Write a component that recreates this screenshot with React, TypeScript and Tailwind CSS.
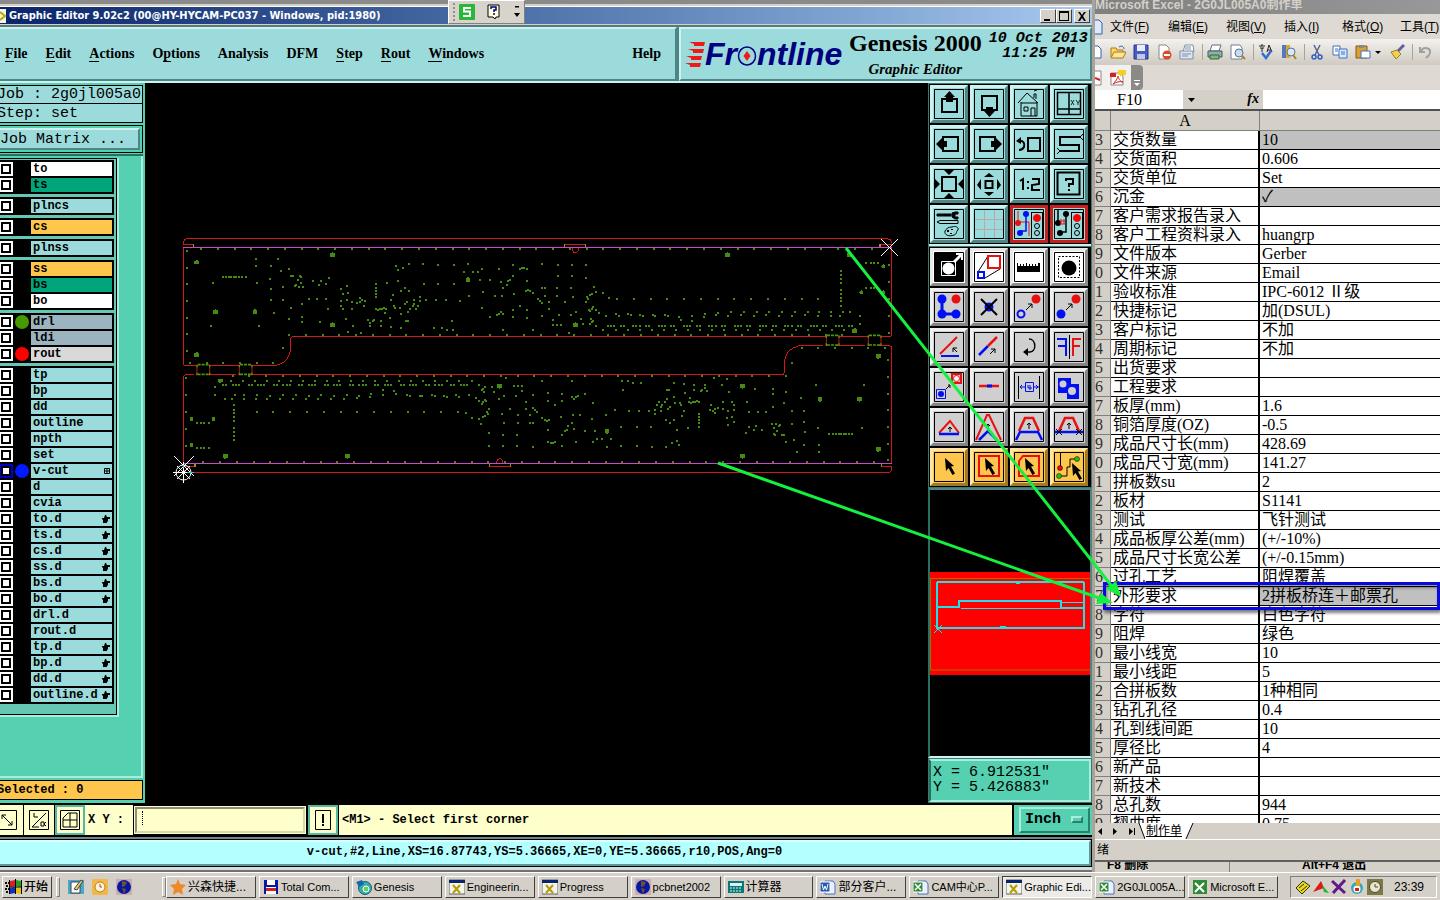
import type { ReactNode } from 'react'

type Layer = { name: string; tone?: string; dot?: string; mark?: 'hand' | 'grid'; active?: boolean }

const teal = 'bg-[#9cdbdb]'

const layerGroups: Layer[][] = [
  [{ name: 'to', tone: 'bg-white' }, { name: 'ts', tone: 'bg-[#00a57c]' }],
  [{ name: 'plncs' }],
  [{ name: 'cs', tone: 'bg-[#ffc64e]' }],
  [{ name: 'plnss' }],
  [{ name: 'ss', tone: 'bg-[#ffc64e]' }, { name: 'bs', tone: 'bg-[#00a57c]' }, { name: 'bo', tone: 'bg-white' }],
  [
    { name: 'drl', tone: 'bg-[#9bb4c0]', dot: 'bg-[#459a00]' },
    { name: 'ldi', tone: 'bg-[#9bb4c0]' },
    { name: 'rout', tone: 'bg-[#d9d9d9]', dot: 'bg-[#ff0000]' },
  ],
  [
    { name: 'tp' },
    { name: 'bp' },
    { name: 'dd' },
    { name: 'outline' },
    { name: 'npth' },
    { name: 'set' },
    { name: 'v-cut', dot: 'bg-[#0019ff]', mark: 'grid', active: true },
    { name: 'd' },
    { name: 'cvia' },
    { name: 'to.d', mark: 'hand' },
    { name: 'ts.d', mark: 'hand' },
    { name: 'cs.d', mark: 'hand' },
    { name: 'ss.d', mark: 'hand' },
    { name: 'bs.d', mark: 'hand' },
    { name: 'bo.d', mark: 'hand' },
    { name: 'drl.d' },
    { name: 'rout.d' },
    { name: 'tp.d', mark: 'hand' },
    { name: 'bp.d', mark: 'hand' },
    { name: 'dd.d', mark: 'hand' },
    { name: 'outline.d', mark: 'hand' },
  ],
]

const sheetRows: [string, string][] = [
  ['交货数量', '10'],
  ['交货面积', '0.606'],
  ['交货单位', 'Set'],
  ['沉金', '✓'],
  ['客户需求报告录入', ''],
  ['客户工程资料录入', 'huangrp'],
  ['文件版本', 'Gerber'],
  ['文件来源', 'Email'],
  ['验收标准', 'IPC-6012 Ⅱ级'],
  ['快捷标记', '加(DSUL)'],
  ['客户标记', '不加'],
  ['周期标记', '不加'],
  ['出货要求', ''],
  ['工程要求', ''],
  ['板厚(mm)', '1.6'],
  ['铜箔厚度(OZ)', '-0.5'],
  ['成品尺寸长(mm)', '428.69'],
  ['成品尺寸宽(mm)', '141.27'],
  ['拼板数su', '2'],
  ['板材', 'S1141'],
  ['测试', '飞针测试'],
  ['成品板厚公差(mm)', '(+/-10%)'],
  ['成品尺寸长宽公差', '(+/-0.15mm)'],
  ['过孔工艺', '阻焊覆盖'],
  ['外形要求', '2拼板桥连＋邮票孔'],
  ['字符', '白色字符'],
  ['阻焊', '绿色'],
  ['最小线宽', '10'],
  ['最小线距', '5'],
  ['合拼板数', '1种相同'],
  ['钻孔孔径', '0.4'],
  ['孔到线间距', '10'],
  ['厚径比', '4'],
  ['新产品', ''],
  ['新技术', ''],
  ['总孔数', '944'],
  ['翘曲度', '0.75'],
]
const shadedRows = [0, 3, 24]

/* ---------- board drawing, three units per screen pixel ---------- */

const holesLeft =
  '243,87 309,87 243,108 288,108 342,117 318,123 285,147 246,159 114,159 348,138 354,138 375,138 378,141 369,150 378,159 363,165 360,168 372,171 384,171 324,171 288,177 288,210 324,210 297,249 348,234 342,267 381,222 381,261 381,276 402,207 426,207 453,207 414,153 438,153 432,165 462,144 453,162 459,237 435,276 516,168 498,177 519,189 504,192 498,213 516,210 498,228 504,237 531,216 546,219 555,216 555,204 561,210 570,213 567,228 531,237 513,267 534,288 519,306 543,315 558,309 603,162 603,174 603,183 603,192 603,201 636,159 669,153 690,174 678,183 702,183 747,162 654,195 648,210 735,201 735,213 717,210 696,216 717,222 690,222 657,228 660,234 675,234 678,252 705,237 714,228 723,237 729,228 699,246 603,237 609,240 615,237 621,237 627,234 633,237 630,249 597,270 594,273 585,279 579,270 585,288 618,273 618,288 648,291 645,264 693,273 699,273 678,294 108,288 252,288 324,354 753,210 783,210 813,210 855,213 882,198 789,162 837,162 663,108 669,120 684,114 702,102 744,102 789,105 837,105 879,102 867,126 894,126 909,126 921,117 915,150 945,150 978,156 984,174 996,165 999,153 1005,150 972,117 924,186 960,198 981,198 1017,192 1014,138 1014,105 1035,117 1041,114 1047,114 1056,117 1101,102 1056,153 1053,183 1059,180 1065,183 1074,189 1089,207 1095,213 1101,219 1101,174 1035,228 1014,240 1056,240 1056,264 1014,261 1101,258 984,252 978,246 972,252 966,255 945,261 921,234 831,273 777,294 801,294 816,300 834,300 984,300 1074,300 144,141 153,141 162,141 168,141 177,141 183,141 192,141 201,141 213,141'
const holesRight =
  '84,105 126,105 168,105 84,138 126,138 168,144 45,174 81,174 123,174 192,171 198,186 219,189 186,192 180,195 171,201 174,207 45,198 81,198 129,201 105,216 168,216 57,216 57,237 138,246 189,231 186,237 180,243 177,240 198,240 207,249 237,204 87,255 123,255 153,267 183,267 189,273 186,276 180,282 159,282 69,270 69,285 81,285 93,285 117,309 198,288 219,300 228,258 261,207 312,207 363,207 411,207 462,207 513,207 564,207 612,207 663,207 714,207 765,207 816,207 864,207 258,252 267,258 294,252 303,255 330,255 339,258 369,255 375,257 405,255 414,258 447,261 453,270 486,258 486,273 522,261 525,252 558,255 564,249 594,258 603,246 633,255 642,246 672,258 681,246 708,255 717,246 747,258 756,246 786,258 795,246 825,255 834,246 864,258 867,246 903,258 903,246 939,246 960,246 930,258 990,258 990,282 933,123 933,135 933,147 933,159 933,180 933,192 933,204 933,213 933,228 1008,99 1023,99 1032,99 1044,99 1008,174 1023,174 1032,174 1044,174'

const parse = (s: string, dx: number) =>
  s.split(' ').map((p) => {
    const [x, y] = p.split(',').map(Number)
    return [x + dx, y]
  })

const range = (n: number) => Array.from({ length: n }, (_, i) => i)

const holes = [
  ...parse(holesLeft, 0),
  ...parse(holesRight, 1065),
  ...range(20).flatMap((i) => [
    [1299 + i * 38, 288],
    [1308 + i * 38, 288],
    ...(i % 2 ? [] : [[1318 + i * 38, 288]]),
    [1323 + i * 36, 300],
  ]),
  ...range(41).map((i) => [78 + Math.round(i * 50.3), 57]),
  ...range(34).map((i) => [342 + Math.round(i * 50.3), 315]),
  ...range(7).map((i) => [36, 63 + i * 50]),
  ...range(5).map((i) => [2142, 105 + i * 51]),
  ...range(6).map((i) => [45 + i * 50, 399]),
]

const pads = [
  [65, 97], [65, 375], [121, 246], [240, 246], [472, 75], [472, 285], [879, 150],
  [1657, 75], [1201, 285], [2039, 302], [2024, 75],
]
const rounds = [[2125, 109], [2125, 187], [2059, 187]]

function HalfBoard() {
  return (
    <g fill="none" strokeWidth="3" shapeRendering="crispEdges">
      <g stroke="#d01818">
        <path d="M25 43V36Q26 27 36 26H2138Q2150 28 2150 38M25 43H56M2117 43H2150" />
        <path d="M25 52V400Q25 406 31 406H66M104 406H193M230 406H305Q347 395 347 352V326Q348 320 354 320H1954M1992 320H2080M2118 320H2144Q2150 318 2150 312V52" />
        <path d="M1168 44H1231M1192 52V60Q1194 68 1201 68Q1208 68 1210 60V52" />
      </g>
      <path d="M56 43V51M1168 43V51M1231 43V51M2115 43V51" stroke="#a09018" strokeWidth="4" />
      <g fill="#458a12" stroke="none">
        {holes.map(([x, y], i) => (
          <rect key={i} x={x - 3} y={y - 3} width="6" height="6" />
        ))}
        {pads.map(([x, y], i) => (
          <path key={i} d={`M${x - 7} ${y - 5}h5v-3h5v3h4v11h-14z`} />
        ))}
        {rounds.map(([x, y], i) => (
          <circle key={i} cx={x} cy={y} r="6" />
        ))}
      </g>
    </g>
  )
}

function Bridge({ x, y }: { x: number; y: number }) {
  return (
    <g fill="none" strokeWidth="4">
      <path d={`M${x} ${y}v28M${x + 38} ${y}v28`} stroke="#b02010" strokeWidth="3" />
      <path d={`M${x} ${y - 2}v8M${x} ${y + 22}v8M${x + 38} ${y - 2}v8M${x + 38} ${y + 22}v8`} stroke="#80800c" />
      <path d={`M${x + 2} ${y - 2}h34M${x + 2} ${y + 27}h34`} stroke="#459a12" strokeWidth="5" strokeDasharray="9 3" />
    </g>
  )
}

function BoardCanvas() {
  return (
    <svg className="block h-full w-full bg-black" viewBox="145 83 783 720" preserveAspectRatio="xMinYMin meet">
      <g transform="translate(175 230) scale(.33333)">
        <HalfBoard />
        <g transform="rotate(180 1087.5 377)">
          <HalfBoard />
        </g>
        <Bridge x={66} y={406} />
        <Bridge x={193} y={406} />
        <Bridge x={1954} y={318} />
        <Bridge x={2080} y={318} />
      </g>
      {/* v-cut score lines */}
      <path d="M183 247h709v1h-709zM183 463h709v1h-709z" fill="#c848d0" />
      <g stroke="#fff" fill="none">
        <path d="M881 239l17 17M898 239l-17 17M174 456l20 20M194 456l-20 20M183.500 462v21M173 472.500h21" />
        <circle cx="183.500" cy="472.500" r="7.500" />
        <path d="M177 466l13 13M190 466l-13 13" />
        <path d="M187 472.500h7M183.500 468v-3" stroke="#20d0e0" />
      </g>
    </svg>
  )
}

/* ---------- tool palette ---------- */

const K = '#000'
const R = '#e81010'
const B = '#0010f0'

const Light = ({ wires }: { wires: ReactNode }) => (
  <>
    {wires}
    <g stroke={K} strokeWidth="1" fill="none">
      <rect x="17.500" y="3.500" width="11" height="26" />
      <circle cx="23" cy="9" r="3.500" fill="red" stroke={R} />
      <circle cx="23" cy="17" r="2.500" />
      <circle cx="23" cy="24" r="2.500" />
    </g>
  </>
)

const Cursor = ({ x, y }: { x: number; y: number }) => (
  <path transform={`translate(${x} ${y})`} d="M0 0l9 8-3 .5 4 7-2.500 1.500-4-7L1 13z" fill={K} />
)

const viewTools: { label: string; hot?: boolean; art: ReactNode }[] = [
  { label: 'Pan up', art: <><path d="M8 10h15v13H8z" fill="none" stroke={K} strokeWidth="2" /><path d="M15.500 2L21 8h-2v5h-7V8h-2z" /></> },
  { label: 'Pan down', art: <><path d="M8 7h15v14H8z" fill="none" stroke={K} strokeWidth="2" /><path d="M15.500 28L21 22h-2v-4h-7v4h-2z" /></> },
  { label: 'Home', art: <><path d="M4 14L13 4l11 10M7 13v14h16V13M7 14h16M20 9V5h2v5M20 2l3-1M10 18h4v4h-4zM17 27v-8h4v8" fill="none" stroke={K} /></> },
  { label: 'Window XY', art: <><path d="M3.500 3.500h23v22h-23zM15 3v23M3 20h24" fill="none" stroke={K} strokeWidth="1.500" /><path d="M17 11l3 5M20 11l-3 5M22 11l2 3 2-3M24 14v2" stroke={K} fill="none" strokeWidth=".8" /></> },
  { label: 'Pan left', art: <><path d="M9 8h15v14H9z" fill="none" stroke={K} strokeWidth="2" /><path d="M2 15l6-6v3h5v6H8v3z" /></> },
  { label: 'Pan right', art: <><path d="M6 8h15v14H6z" fill="none" stroke={K} strokeWidth="2" /><path d="M28 15l-6-6v3h-5v6h5v3z" /></> },
  { label: 'Previous view', art: <><path d="M14 9h12v13H14z" fill="none" stroke={K} strokeWidth="2" /><path d="M4 12c6-1 7 3 6 6-1 2-3 3-5 3" fill="none" stroke={K} strokeWidth="2" /><path d="M2 12l5-4v7z" /></> },
  { label: 'Zoom path', art: <><path d="M26 8H6v8h19v6H6" fill="none" stroke={K} strokeWidth="2" /><path d="M26 8l3-3M26 8l3 3M6 22l-3-3M6 22l-3 3" stroke={K} /></> },
  { label: 'Fit all', art: <><path d="M8 8h14v14H8z" fill="none" stroke={K} strokeWidth="2" /><path d="M10 1h10l-5 5zM10 29h10l-5-5zM1 10v10l5-5zM29 10v10l-5-5z" /></> },
  { label: 'Zoom in', art: <><path d="M11.500 12h7v7h-7z" fill="none" stroke={K} strokeWidth="2" /><path d="M10 8h10l-5-4zM10 23h10l-5 4zM7 10v11l-4-5zM23 10v11l4-5z" /></> },
  { label: 'Actual scale', art: <path d="M6 12l3-2v11M14 12v2M14 18v2M18 10h7v5l-7 1v5h8" fill="none" stroke={K} strokeWidth="2" /> },
  { label: 'Help', art: <><path d="M3.500 3.500h22v22h-22z" fill="none" stroke={K} strokeWidth="2" /><path d="M12 12v-2h7v5h-4v3M15 20v2" fill="none" stroke={K} strokeWidth="2" /></> },
  { label: 'Setup', art: <><path d="M3 5h14v2H3zM18 4l3-1h3v2h-3v3h3v2h-3l-3-2z" stroke={K} /><path d="M3 13l3-1.500h18v3H6zM18 18c5-2 8 2 5 4-1 1 0 3-3 4-5 2-10 0-9-4 1-2 3-4 7-4z" fill="none" stroke={K} /><path d="M13 21h2v2h-2zM17 20h2v1h-2zM16 24h2v1h-2z" /></> },
  { label: 'Grid', art: <path d="M10.500 1v28M20.500 1v28M1 10.500h28M1 20.500h28" stroke="#b8a8ac" fill="none" /> },
  { label: 'Online check', hot: true, art: <Light wires={<g fill="none"><path d="M4 2v11h11v14M4 13v2" stroke={R} /><path d="M12 5v17H6" stroke={B} strokeWidth="1.500" /><circle cx="4" cy="14" r="3" fill={R} /><circle cx="12" cy="5" r="3" fill={B} /><circle cx="6" cy="24" r="3" fill={B} /></g>} /> },
  { label: 'Net check', hot: true, art: <Light wires={<g fill="none"><path d="M4 1v13M12 5v18H6" stroke={K} strokeWidth="1.500" /><circle cx="4" cy="14" r="3" fill={K} /><circle cx="12" cy="5" r="3" fill={K} /><circle cx="6" cy="24" r="3" fill={K} /><path d="M7 10v5M10 10v5M6 12h5M6 15h5" stroke={R} /></g>} /> },
]

const editTools: { label: string; tone: 'white' | 'gray' | 'gold'; art: ReactNode }[] = [
  { label: 'Zoom area', tone: 'white', art: <><path d="M1 1h28v28H1z" /><path d="M7.500 9.500h14v14h-14z" fill="none" stroke="#fff" strokeWidth="1" /><circle cx="14.500" cy="16.500" r="6" fill="#fff" /><path d="M19 9l6-6h-3V1h7v7h-2V5l-6 6z" fill="#fff" /></> },
  { label: 'Resize', tone: 'white', art: <><path d="M4 20L14 4M11 26l15-9" stroke={K} fill="none" /><path d="M14 4h12v12H14z" stroke={R} fill="none" strokeWidth="2" /><path d="M4 20h6v6H4z" stroke={B} fill="none" strokeWidth="2" /></> },
  { label: 'Measure', tone: 'white', art: <path d="M3 11h1v3h2v-2h1v2h2v-2h1v2h2v-3h1v3h2v-2h1v2h2v-2h1v2h2v-2h1v2h2v-3h2v9H3z" /> },
  { label: 'Select features', tone: 'white', art: <><path d="M4.500 4.500h21v21h-21z" fill="none" stroke={K} strokeDasharray="2 1.500" /><circle cx="15" cy="16" r="7.500" /></> },
  { label: 'Chain', tone: 'gray', art: <><path d="M8 8v14h14" stroke={B} strokeWidth="3" fill="none" /><g fill={B}><circle cx="8" cy="7" r="4.500" /><circle cx="8" cy="22" r="4.500" /><circle cx="22" cy="22" r="4.500" /></g><circle cx="22" cy="7" r="4.500" fill={R} /></> },
  { label: 'Delete', tone: 'gray', art: <><circle cx="15" cy="15" r="4.500" fill={B} /><path d="M7 7l16 16M23 7L7 23" stroke={K} strokeWidth="2" /></> },
  { label: 'Move', tone: 'gray', art: <><circle cx="22" cy="7" r="4.500" fill={R} /><circle cx="7" cy="22" r="3.500" fill="none" stroke={B} strokeWidth="2" /><path d="M12 18l6-6M14 12h4v4" stroke={K} fill="none" /></> },
  { label: 'Copy', tone: 'gray', art: <><circle cx="22" cy="7" r="4.500" fill={R} /><circle cx="7" cy="22" r="4.500" fill={B} /><path d="M12 18l6-6M14 12h4v4" stroke={K} fill="none" /></> },
  { label: 'Angle', tone: 'gray', art: <><path d="M6 22L23 5" stroke={R} strokeWidth="2" /><path d="M7 24h18" stroke={B} strokeWidth="2" /><path d="M23 20l-4-4M19 20v-4h4" stroke={K} fill="none" /></> },
  { label: 'Extend line', tone: 'gray', art: <><path d="M5 23l9-9" stroke={B} strokeWidth="2.500" /><path d="M14 14l9-9" stroke={R} strokeWidth="2.500" /><path d="M16 22l5-5M17 17h4v4" stroke={K} fill="none" /></> },
  { label: 'Rotate', tone: 'gray', art: <><path d="M15 7c7 0 8 12 1 13h-3" fill="none" stroke={K} strokeWidth="1.500" /><path d="M14 16l-5 4 5 4z" /></> },
  { label: 'Mirror', tone: 'gray', art: <><path d="M15.500 3v24" stroke={K} /><path d="M3 7h9v17M4 14h8" stroke={B} strokeWidth="2" fill="none" /><path d="M27 7h-8v17M19 14h7" stroke={R} strokeWidth="2" fill="none" /></> },
  { label: 'Substitute', tone: 'gray', art: <><path d="M18 2h9v9h-9z" fill="none" stroke={R} strokeWidth="2" /><circle cx="22.500" cy="6.500" r="3" fill="#fff" stroke={R} /><path d="M2.500 17.500h9v9h-9z" fill="none" stroke={B} /><circle cx="7" cy="22" r="3" fill={B} /><path d="M12 17l4-4M14 13h2v3" stroke={K} fill="none" /></> },
  { label: 'Break line', tone: 'gray', art: <><path d="M5 14h20" stroke={R} strokeWidth="2.500" /><path d="M13 14h5" stroke={B} strokeWidth="3" /></> },
  { label: 'Spacing', tone: 'gray', art: <><path d="M4.500 4v23M25.500 4v23" stroke={K} /><path d="M6 15h5M20 15h5M8 13l-2 2 2 2M22 13l2 2-2 2M11.500 10.500h8v9h-8zM14 13v3h4M16 13v5" stroke={B} fill="none" /></> },
  { label: 'Merge', tone: 'gray', art: <><path d="M4 6h13v6h8v15H13v-6H4z" fill={B} /><circle cx="9" cy="12" r="3.500" fill="#cfcfcf" /><circle cx="18" cy="19" r="4" fill="#cfcfcf" /></> },
  { label: 'Triangle', tone: 'gray', art: <><path d="M5 21l11-12 9 12" stroke={R} strokeWidth="2" fill="none" /><path d="M5 22h20" stroke={B} strokeWidth="2.500" /><path d="M16 20v-4M14 17l2-2 2 2" stroke={K} fill="none" /></> },
  { label: 'Peak', tone: 'gray', art: <><path d="M2 28L13 3h2l12 25" stroke={R} strokeWidth="2" fill="none" /><path d="M5 28l9-9 9 9" stroke={B} strokeWidth="2.500" fill="none" /><path d="M14 17v-5M12 14l2-2 2 2" stroke={K} fill="none" /></> },
  { label: 'Trapezoid', tone: 'gray', art: <><path d="M5 19l6-13h8l6 13" stroke={R} strokeWidth="2.500" fill="none" /><path d="M2 28l4-8h18l4 8" stroke={B} strokeWidth="2.500" fill="none" /><path d="M15 17v-6M13 13l2-2 2 2" stroke={K} fill="none" /></> },
  { label: 'Trim', tone: 'gray', art: <><path d="M5 19l6-13h8l6 13" stroke={R} strokeWidth="2.500" fill="none" /><path d="M1 20h28" stroke={B} strokeWidth="2.500" /><path d="M15 17v-6M13 13l2-2 2 2M2 17l6 6M8 17l-6 6M22 17l6 6M28 17l-6 6" stroke={K} fill="none" /></> },
  { label: 'Pick', tone: 'gold', art: <Cursor x={11} y={6} /> },
  { label: 'Pick in box', tone: 'gold', art: <><path d="M5 4h20v20H5z" fill="none" stroke={R} strokeWidth="2" /><Cursor x={11} y={6} /></> },
  { label: 'Pick in shape', tone: 'gold', art: <><path d="M9 4h16v20H5V9z" fill="none" stroke={R} strokeWidth="2" /><Cursor x={11} y={6} /></> },
  { label: 'Pick net', tone: 'gold', art: <><path d="M6.500 1v14M6 24h7V15h3V7h6" fill="none" stroke={K} /><circle cx="6" cy="16" r="2.500" fill={R} stroke={K} strokeWidth=".5" /><circle cx="5" cy="24" r="2.500" fill="#20c020" stroke={K} strokeWidth=".5" /><circle cx="23" cy="7" r="2.500" fill="#20c020" stroke={K} strokeWidth=".5" /><Cursor x={18} y={11} /></> },
]

const toolTone = {
  white: 'bg-white border-t-[#e8e8e8] border-l-[#e8e8e8] border-b-[#8c8c8c] border-r-[#8c8c8c]',
  gray: 'bg-[#cfcfcf] border-t-[#f0f0f0] border-l-[#f0f0f0] border-b-[#858585] border-r-[#858585]',
  gold: 'bg-[#ffc64e] border-t-[#ffe6a8] border-l-[#ffe6a8] border-b-[#a07a28] border-r-[#a07a28]',
}
const toolTeal = 'bg-[#9cdbdb] border-t-[#cdf2f2] border-l-[#cdf2f2] border-b-[#4f8585] border-r-[#4f8585]'
const toolHot = 'bg-[#9cdbdb] border-[#c42020]'

function ToolButton({ label, className, children }: { label: string; className: string; children: ReactNode }) {
  return (
    <button aria-label={label} className={`flex size-[38px] items-center justify-center border-[3px] ${className}`}>
      <svg width="30" height="30" viewBox="0 0 30 30">
        <path d="M.5.5h29v29H.5z" fill="none" stroke="#000" />
        {children}
      </svg>
    </button>
  )
}

/* ---------- Graphic Editor window ---------- */

const menus = [
  ['', 'F', 'ile'],
  ['', 'E', 'dit'],
  ['', 'A', 'ctions'],
  ['O', 'p', 'tions'],
  ['Analysis', '', ''],
  ['DFM', '', ''],
  ['', 'S', 'tep'],
  ['', 'R', 'out'],
  ['', 'W', 'indows'],
]

const raised = 'border-2 border-t-[#cdf2f2] border-l-[#cdf2f2] border-b-[#4f8585] border-r-[#4f8585]'

function TitleBar() {
  return (
    <div className="flex h-[27px] flex-col border-b-2 border-[#5a7a7c] bg-[#d4d0c8]">
      <div className="h-1 bg-[#8a8a8a]" />
      <div className="h-[3px] border-b border-white" />
      <div className="flex h-[17px] items-center justify-between bg-gradient-to-r from-[#0a246a] to-[#a6caf0] pr-[2px] font-['DejaVu_Sans_Condensed','DejaVu_Sans',sans-serif]">
        <div className="flex items-center gap-[3px]">
          <svg width="6" height="14" viewBox="0 0 6 14"><path d="M0 0h6v14H0z" fill="#f4f4e8" /><path d="M0 3l5 4-5 4" stroke="#b8a800" strokeWidth="2" fill="none" /></svg>
          <h1 className="text-[11px] leading-4 font-bold whitespace-nowrap text-white">Graphic Editor 9.02c2 (00@HY-HYCAM-PC037 - Windows, pid:1980)</h1>
        </div>
        <div className="flex">
          {['M2 9h6v2H2z', 'M1 1h10v10H1zM2 3v7h8V3z', 'M2 2h2l2 3 2-3h2L7 6l3 5H8L6 8l-2 3H2l3-5z'].map((d, i) => (
            <button key={i} aria-label={['Minimize', 'Maximize', 'Close'][i]} className="flex h-[14px] w-4 items-center justify-center border border-t-white border-r-[#404040] border-b-[#404040] border-l-white bg-[#d4d0c8] last:ml-[2px]">
              <svg width="12" height="12" viewBox="0 0 12 12"><path d={d} fillRule="evenodd" /></svg>
            </button>
          ))}
        </div>
      </div>
    </div>
  )
}

function FrontlineLogo() {
  return (
    <div className="flex items-center font-['Liberation_Sans',Arial,sans-serif] text-[32px] leading-8 font-bold text-[#000080] italic">
      <svg width="20" height="26" viewBox="0 0 20 26">
        <path d="M4 1h16l-1 4H9V3zM3 8h16l-1 4H8v-2zM1 15h16l-1 4H6v-2zM0 22h16l-1 4H5v-2z" fill="#f01818" />
      </svg>
      <span>Fr</span>
      <svg width="20" height="26" viewBox="0 0 20 26">
        <ellipse cx="10" cy="15" rx="8.500" ry="9" fill="none" stroke="#000080" strokeWidth="1.500" />
        <path d="M10 10l3.500 5-3.500 5-3.500-5z" fill="#f01818" />
      </svg>
      <span>ntline</span>
    </div>
  )
}

function Header() {
  return (
    <header className="flex h-14 border-b-2 border-[#cdf2f2] bg-[#4f8585] font-['Liberation_Serif',serif] font-bold">
      <nav className={`flex flex-1 items-center gap-[18px] pr-[14px] pl-[5px] text-sm ${teal} ${raised} border-l-0`}>
        {menus.map(([a, u, b]) => (
          <button key={a + u + b} className="leading-5">
            {a}
            <span className="border-b border-black">{u}</span>
            {b}
          </button>
        ))}
        <button className="ml-auto leading-5">Help</button>
      </nav>
      <div className={`ml-[2px] flex w-[413px] items-start pl-1 ${teal} ${raised}`}>
        <div className="mt-[9px]">
          <FrontlineLogo />
        </div>
        <div className="ml-[5px] w-[136px] shrink-0 text-center whitespace-nowrap">
          <div className="text-2xl leading-7">Genesis 2000</div>
          <div className="text-[15px] leading-6 italic">Graphic Editor</div>
        </div>
        <div className="ml-[5px] w-[100px] shrink-0 pt-[2px] text-center font-['Liberation_Mono',monospace] text-[15px] leading-[15px] whitespace-nowrap italic">
          10 Oct 2013
          <br />
          11:25 PM
        </div>
      </div>
    </header>
  )
}

const Hand = () => (
  <svg width="8" height="8" viewBox="0 0 8 8"><path d="M3 0h1l1 2h3v2H6v2L5 7v1H1V5L0 4V3h2z" /></svg>
)

const GridMark = () => (
  <svg width="6" height="6" viewBox="0 0 6 6"><path d="M.5.5h5v5h-5zM3 0v6M0 3h6" fill="none" stroke="#000" /></svg>
)

function LayerRow({ layer }: { layer: Layer }) {
  return (
    <label className="mb-[2px] flex h-[14px]">
      <span className={`flex w-[13px] items-center ${layer.active ? 'bg-[#0000c8]' : 'bg-white'}`}>
        <input type="checkbox" className="ml-px size-[10px] appearance-none border-2 border-black bg-white" />
      </span>
      <span className="flex w-[18px] items-center justify-center">
        {layer.dot && <span className={`size-[14px] rounded-full ${layer.dot}`} />}
      </span>
      <span className={`flex w-[81px] items-center justify-between pr-[2px] pl-[2px] text-xs leading-[14px] font-bold ${layer.tone ?? teal}`}>
        {layer.name}
        {layer.mark === 'hand' && <Hand />}
        {layer.mark === 'grid' && <GridMark />}
      </span>
    </label>
  )
}

function LayerPanel() {
  return (
    <aside className="flex w-[145px] shrink-0 flex-col border-r-2 border-[#55d0b0] bg-[#55d0b0] pt-[2px] pb-[3px] font-['Liberation_Mono',monospace] whitespace-nowrap">
      <div className={`h-[19px] border border-l-0 border-black text-[15px] leading-[17px] -indent-[3px] ${teal}`}>Job : 2g0jl005a0</div>
      <div className={`-mt-px h-5 border border-l-0 border-black text-[15px] leading-[19px] -indent-[3px] ${teal}`}>Step: set</div>
      <div className="mt-[2px] flex h-7 border border-l-0 border-black bg-[#55d0b0] py-[2px] pr-[2px]">
        <button className={`flex-1 text-left text-[15px] leading-5 ${teal} ${raised} border-l-0`}>Job Matrix ...</button>
      </div>
      <div className="mt-px h-[2px] bg-[#2a7060]" />
      <div className="flex flex-1 flex-col border-r-2 border-b-2 border-[#a8eedc] pt-[2px]">
        <div className="flex w-[119px] flex-col gap-[3px] border-r-2 border-b-2 border-[#a8eedc] bg-[#66c8b4]">
          <div className="flex h-[557px] flex-col gap-[3px] border-t border-r border-b border-black pt-px">
            {layerGroups.map((group, i) => (
              <div key={i} className="w-[114px] bg-black pt-[2px]">
                {group.map((layer) => (
                  <LayerRow key={layer.name} layer={layer} />
                ))}
              </div>
            ))}
          </div>
        </div>
      </div>
      <div className="mt-[2px] h-5 border border-l-0 border-black bg-[#ffc64e] text-xs leading-[18px] font-bold -indent-[3px]">Selected : 0</div>
    </aside>
  )
}

function Overview() {
  return (
    <div className="mt-px flex flex-1 flex-col justify-center border-2 border-t-[#4f8585] border-r-[#4f8585] border-b-[#cdf2f2] border-l-[#2a7060] bg-black">
      <svg className="block w-full" viewBox="930 573 160 103">
        <path d="M930 573h160v103H930z" fill="#f00" />
        <path d="M930.500 579.500H1090M930.500 579v92H1090" fill="none" stroke="#a07000" />
        <g fill="none" stroke="#20e0e8">
          <path d="M937 583V608H959V602H1061V609H1084V583M937 608V629H1084V605" strokeWidth="2" />
          <path d="M937 583H1084" strokeWidth="2" />
          <path d="M961 609.500H1061M1061 609V603.500H1084M934 626l8 8M942 626l-8 8M1000 627.500h6M1016 584.500h4" />
        </g>
      </svg>
    </div>
  )
}

function ToolPanel() {
  return (
    <aside className="flex w-[164px] shrink-0 flex-col bg-[#3c7a70]">
      <div className="mx-px mt-px grid grid-cols-[repeat(4,38px)] gap-[2px] border-b-2 border-[#cdf2f2] bg-black p-px">
        {viewTools.map((t) => (
          <ToolButton key={t.label} label={t.label} className={t.hot ? toolHot : toolTeal}>{t.art}</ToolButton>
        ))}
      </div>
      <div className="mx-px mt-px grid grid-cols-[repeat(4,38px)] gap-[2px] bg-black p-px">
        {editTools.map((t) => (
          <ToolButton key={t.label} label={t.label} className={toolTone[t.tone]}>{t.art}</ToolButton>
        ))}
      </div>
      <Overview />
      <div className="m-px h-[43px] border-2 border-t-[#a8eedc] border-r-[#a8eedc] border-b-[#a8eedc] border-l-[#2a7060] bg-[#55d0b0] pt-1 pl-[2px] font-['Liberation_Mono',monospace] text-[15px] leading-[15px] whitespace-pre">
        {'X = 6.912531"\nY = 5.426883"'}
      </div>
    </aside>
  )
}

const snapArt = [
  'M5 5l10 10M5 9V5h4M11 15h4v-4',
  'M3 17L17 3M3 17h7M5 3v4h4M12 12h3v4h-3zM17 12l-2 2 2 2',
  'M3 17V8l5-5h9v14zM10 3v14M3 10h14',
]

function CommandBar() {
  return (
    <div className="flex h-[34px] border-y-2 border-black bg-[#ffffcc] font-['Liberation_Mono',monospace] text-xs font-bold">
      {snapArt.map((d, i) => (
        <button key={i} aria-label={['Snap off', 'Snap angle', 'Snap grid'][i]} className={i === 2 ? 'flex w-[30px] items-center justify-center border-2 border-[#55b8a0] bg-[#ffffcc]' : i === 0 ? 'flex w-6 items-center justify-start overflow-hidden border-r border-black' : 'flex w-[31px] items-center justify-center border-r border-black'}>
          <svg width="22" height="22" viewBox="-1 -1 22 22" className={i === 0 ? '-ml-1 shrink-0' : 'shrink-0'}>
            <path d="M.5.5h19v19H.5z" fill="none" stroke="#000" />
            <path d={d} fill="none" stroke="#000" />
          </svg>
        </button>
      ))}
      <label htmlFor="xy" className="w-12 pl-[3px] leading-[30px] whitespace-nowrap">X Y :</label>
      <div className="relative flex w-[174px] border border-black p-px">
        <input id="xy" className="w-full border-2 border-t-[#8c8c78] border-r-[#d8d8b0] border-b-[#d8d8b0] border-l-[#8c8c78] bg-[#ffffcc] px-1 outline-none" />
        <span className="pointer-events-none absolute top-[5px] left-2 h-[14px] border-l border-dotted border-black" />
      </div>
      <button aria-label="Alert" className="flex w-8 items-center justify-center border-x border-black bg-[#ffffcc] shadow-[inset_0_0_0_2px_#55b8a0]">
        <svg width="16" height="20" viewBox="0 0 16 20"><path d="M.5.5h15v19H.5z" fill="none" stroke="#000" /><path d="M8 4v9M8 14v2" stroke="#000" strokeWidth="2" /></svg>
      </button>
      <div className="flex-1 pl-[3px] leading-[30px]">&lt;M1&gt; - Select first corner</div>
      <div className="flex w-20 border-l-2 border-black bg-[#55d0b0] p-[2px] pl-[5px]">
        <label className="relative flex flex-1">
          <select aria-label="Unit" className="w-full appearance-none border-2 border-t-[#a8eedc] border-r-[#2a8068] border-b-[#2a8068] border-l-[#a8eedc] bg-[#55d0b0] pl-1 text-[15px] leading-5 font-bold">
            <option>Inch</option>
            <option>mm</option>
          </select>
          <span className="pointer-events-none absolute top-[9px] right-[7px] h-[7px] w-3 border-2 border-t-[#a8eedc] border-r-[#2a8068] border-b-[#2a8068] border-l-[#a8eedc]" />
        </label>
      </div>
    </div>
  )
}

function GraphicEditor() {
  return (
    <section className="flex min-w-0 flex-1 flex-col border-r-[3px] border-[#a8a49c]">
      <TitleBar />
      <Header />
      <div className="flex min-h-0 flex-1">
        <LayerPanel />
        <main className="min-w-0 flex-1 overflow-hidden bg-black">
          <BoardCanvas />
        </main>
        <ToolPanel />
      </div>
      <CommandBar />
      <div className="h-[30px] border-t-2 border-[#708888] bg-black pt-px pr-px pb-px">
        <div className="h-full border-2 border-l-0 border-t-[#d8ffff] border-r-[#609898] border-b-[#609898] bg-[#b4ffff] text-center font-['Liberation_Mono',monospace] text-xs leading-5 font-bold">
          v-cut,#2,Line,XS=16.87743,YS=5.36665,XE=0,YE=5.36665,r10,POS,Ang=0
        </div>
      </div>
      <div className="h-[5px] border-b-2 border-[#707070] bg-[#d0e0e0]" />
    </section>
  )
}

/* ---------- Excel window ---------- */

const sheetIcons: { name: string; art: ReactNode; divider?: boolean; menu?: boolean }[] = [
  { name: 'Open', art: <><path d="M1 13V4h5l1 2h6v3" fill="#ffd868" stroke="#a87818" /><path d="M1 14l3-6h12l-3 6z" fill="#ffe690" stroke="#a87818" /><path d="M9 3c3-2 5 0 5 2" fill="none" stroke="#4060a0" /></> },
  { name: 'Save', art: <><path d="M1 1h14v14H1z" fill="#4a5cc0" stroke="#28348a" /><path d="M4 1h8v6H4z" fill="#e8ecff" /><path d="M4 10h8v5H4z" fill="#c0c8e8" /></> },
  { name: 'Permission', art: <><path d="M3 1h7l3 3v11H3z" fill="#fff" stroke="#888" /><circle cx="11" cy="11" r="4.500" fill="#e04828" /><path d="M8 11h6" stroke="#fff" strokeWidth="2" /></> },
  { name: 'Mail', art: <><path d="M6 1h8l1 7H4z" fill="#fff" stroke="#8090a8" /><path d="M1 7h13v8H1z" fill="#dce4f0" stroke="#8090a8" /><path d="M3 10h9M3 12h6M6 3h6M6 5h6" fill="none" stroke="#8090a8" /></> },
  { name: 'Print', divider: true, art: <><path d="M5 1h9l-2 6H3z" fill="#fff" stroke="#607080" /><path d="M1 7h14v6H1z" fill="#90b0a8" stroke="#405860" /><path d="M3 11h9v4H3z" fill="#78c060" stroke="#405860" /></> },
  { name: 'Preview', art: <><path d="M1 1h9l2 3v11H1z" fill="#fff" stroke="#708098" /><circle cx="9" cy="9" r="4" fill="#c8dcf0" stroke="#607090" /><path d="M12 12l3 3" stroke="#b08020" strokeWidth="2" /></> },
  { name: 'Spelling', divider: true, art: <><path d="M1 2h6M4 0v2M2 4h4M4 4v4M9 8l2-7 3 7M10 6h3" fill="none" stroke="#202020" /><path d="M4 9l4 5 5-7" fill="none" stroke="#3070d0" strokeWidth="2.500" /></> },
  { name: 'Research', art: <><path d="M1 1h4v13H1z" fill="#5878b8" /><path d="M5 1h4v13H5z" fill="#d8a838" /><circle cx="10" cy="8" r="4" fill="#d8e8f8" stroke="#607090" /><path d="M12 11l3 4" stroke="#b08020" strokeWidth="2" /></> },
  { name: 'Cut', divider: true, art: <><path d="M5 1l5 10M11 1L6 11" stroke="#506898" strokeWidth="1.500" fill="none" /><circle cx="5" cy="13" r="2" fill="none" stroke="#3060c0" strokeWidth="1.500" /><circle cx="11" cy="13" r="2" fill="none" stroke="#3060c0" strokeWidth="1.500" /></> },
  { name: 'Copy', art: <><path d="M1 2h7v9H1z" fill="#fff" stroke="#4070c0" /><path d="M7 5h8v9H7z" fill="#d8e8ff" stroke="#4070c0" /><path d="M9 8h4M9 10h4M3 5h3M3 7h3" stroke="#4070c0" /></> },
  { name: 'Paste', menu: true, art: <><path d="M1 2h11v12H1z" fill="#d8a038" stroke="#80581a" /><path d="M4 1h5v3H4z" fill="#888" /><path d="M6 7h9v7H6z" fill="#fff" stroke="#4070c0" /></> },
  { name: 'Format painter', art: <><path d="M15 1L9 7" stroke="#6060a0" strokeWidth="3" /><path d="M2 8l6-2 4 4-5 5z" fill="#f0d050" stroke="#a08020" /></> },
  { name: 'Undo', divider: true, art: <path d="M3 3v5h5M4 7c3-5 10-3 9 2-1 3-3 4-4 5" fill="none" stroke="#a0a0a0" strokeWidth="2" /> },
]

function SheetToolbar() {
  return (
    <div className="flex h-[26px] items-center gap-[7px] bg-gradient-to-b from-[#f4f2ee] to-[#cfcbc2]">
      <button aria-label="New" className="mr-px">
        <svg width="7" height="16" viewBox="0 0 7 16"><path d="M0 2h3l3 3v9H0" fill="#fff" stroke="#3a5fa8" /></svg>
      </button>
      {sheetIcons.map((icon) => (
        <div key={icon.name} className="flex shrink-0 items-center gap-1">
          {icon.divider && <span className="h-4 w-px bg-[#a8a49c]" />}
          <button aria-label={icon.name}>
            <svg width="16" height="16" viewBox="0 0 16 16">{icon.art}</svg>
          </button>
          {icon.menu && (
            <button aria-label="Paste options" className="w-[7px]">
              <svg width="6" height="3" viewBox="0 0 6 3"><path d="M0 0h6L3 3z" /></svg>
            </button>
          )}
        </div>
      ))}
    </div>
  )
}

function Excel() {
  return (
    <section className="flex w-[345px] shrink-0 flex-col overflow-hidden bg-[#d4d0c8] font-['Liberation_Sans','Noto_Sans_CJK_SC',sans-serif]">
      <h2 className="h-[14px] overflow-hidden bg-gradient-to-r from-[#808080] to-[#989898] text-xs leading-[11px] font-bold whitespace-nowrap text-[#d4d0c8]">
        Microsoft Excel - 2G0JL005A0制作单
      </h2>
      <nav className="flex h-[25px] items-center bg-[#dedad3] text-xs whitespace-nowrap">
        <svg width="8" height="16" viewBox="0 0 8 16" className="mr-[7px] shrink-0"><path d="M0 1h4l3 3v11H0" fill="#dce8ff" stroke="#3a5fa8" /></svg>
        {[['文件', 'F'], ['编辑', 'E'], ['视图', 'V'], ['插入', 'I'], ['格式', 'O'], ['工具', 'T']].map(([name, key]) => (
          <button key={key} className="w-[58px] shrink-0 text-left">
            {name}(<u>{key}</u>)
          </button>
        ))}
      </nav>
      <SheetToolbar />
      <div className="flex h-[25px] bg-[#dedad3]">
        <div className="flex items-center gap-2 bg-[#f2f0ec] pr-[5px]">
          <svg width="7" height="16" viewBox="0 0 7 16"><path d="M0 1h6v14H0" fill="#fff" stroke="#888" /><path d="M0 8l5 2" stroke="#e02020" strokeWidth="2" /></svg>
          <svg width="16" height="16" viewBox="0 0 16 16"><path d="M1 3h9l3 3v9H1z" fill="#fff" stroke="#888" /><path d="M0 3h6v4H0z" fill="#d82020" /><path d="M8 0h8v5h-4l-2 2V5H8z" fill="#f4d020" /><path d="M3 14c4-4 5-7 5-8 1 4 3 6 5 6-3-1-7 0-10 2z" fill="none" stroke="#d82020" /></svg>
        </div>
        <div className="flex w-3 items-end justify-center rounded-r-sm bg-[#8c8a86] pb-1">
          <svg width="6" height="6" viewBox="0 0 6 6"><path d="M0 0h6v1H0zM0 3h6L3 6z" fill="#fff" /></svg>
        </div>
      </div>
      <div className="flex h-[21px] border-b-2 border-[#505050]">
        <input aria-label="Name box" defaultValue="F10" className="w-[88px] bg-white pl-[22px] font-['Liberation_Serif',serif] text-base outline-none" />
        <button aria-label="Name list" className="flex w-4 items-center justify-center"><svg width="7" height="4" viewBox="0 0 7 4"><path d="M0 0h7L3.500 4z" /></svg></button>
        <span className="ml-auto w-[60px] pr-1 text-right font-['Liberation_Serif',serif] text-sm leading-[18px] font-bold italic">fx</span>
        <input aria-label="Formula" className="w-[177px] bg-white outline-none" />
      </div>
      <div className="relative min-h-0 flex-1 overflow-hidden bg-white">
        <table className="w-full table-fixed border-separate border-spacing-0 font-['Liberation_Serif','Noto_Sans_CJK_SC',serif] text-base leading-[18px] whitespace-nowrap">
          <colgroup>
            <col className="w-4" />
            <col className="w-[149px]" />
            <col />
          </colgroup>
          <thead>
            <tr className="h-5 bg-[#d4d0c8]">
              <th className="border-r border-b border-[#808080] p-0" />
              <th className="border-r border-b border-[#808080] p-0 pt-px font-normal">A</th>
              <th className="border-b border-[#808080] p-0" />
            </tr>
          </thead>
          <tbody>
            {sheetRows.map(([name, value], i) => (
              <tr key={i} className="h-[19px]">
                <th className="overflow-hidden border-r border-b border-[#808080] bg-[#d4d0c8] p-0 text-left font-normal text-[#303030]">{(i + 3) % 10}</th>
                <td className="overflow-hidden border-r-2 border-b border-black p-0 pl-[2px]">{name}</td>
                <td className={`overflow-hidden border-b border-black p-0 pl-[2px] ${shadedRows.includes(i) ? 'bg-[#c0c0c0]' : ''}`}>{value}</td>
              </tr>
            ))}
          </tbody>
        </table>
        <div className="absolute top-[471px] right-0 left-2 h-7 border-[3px] border-[#0808e0] shadow-[1px_3px_3px_rgba(0,0,0,0.5),inset_1px_3px_3px_rgba(0,0,0,0.4)]" />
      </div>
      <div className="flex h-[17px] items-center border-b border-white text-xs">
        <svg width="50" height="17" viewBox="0 0 50 17"><path d="M7 5v7L3 8.500zM18 5v7l4-3.500zM34 5v7l4-3.500zM39 5h1v7h-1z" /><path d="M44 0h6v17z" fill="#fff" /><path d="M44 0l6 16" stroke="#000" /></svg>
        <button className="bg-white px-px leading-4 underline">制作单</button>
        <svg width="11" height="17" viewBox="0 0 11 17"><path d="M0 0h10L3 17H0z" fill="#fff" /><path d="M10 0L3 16" stroke="#000" fill="none" /></svg>
      </div>
      <div className="h-[22px] border-b-2 border-[#606060] pl-[2px] text-xs leading-5">绪</div>
      <div className="flex h-[10px] overflow-hidden text-xs leading-[6px] font-bold">
        <span className="w-[135px] border-r border-[#808080] pl-3">F8 删除</span>
        <span className="pl-[72px]">Alt+F4 退出</span>
      </div>
    </section>
  )
}

/* ---------- task bar ---------- */

const XIcon = () => <><path d="M0 1h16v14H0z" fill="#f4f4ec" stroke="#606060" /><path d="M0 1h16v3H0z" fill="#0a246a" /><path d="M4 6l7 8M11 6l-7 8" stroke="#b0a000" strokeWidth="2" /></>
const Globe = () => <><path d="M0 0h16v16H0z" fill="#c8b0b0" /><circle cx="8" cy="8" r="7" fill="#0818a0" /><path d="M6 2l5 1-2 4-3 1zM6 9l4 1-2 5z" fill="#705030" /></>
const Book = ({ c }: { c: string }) => <><path d="M5 2h8l2 3v10H5z" fill="#e8f0ff" stroke="#5070b0" /><path d="M0 3h10v10H0z" fill={c} stroke="#fff" /></>
const xls = <><Book c="#2f8a3a" /><path d="M2 5l6 6M8 5l-6 6" stroke="#fff" strokeWidth="1.500" /></>

const tasks: [string, ReactNode, boolean?][] = [
  ['兴森快捷...', <path d="M8 0l2 5 6 1-4 4 1 6-5-3-5 3 1-6-4-4 6-1z" fill="#f08828" />],
  ['Total Com...', <><path d="M1 1h14v14H1z" fill="#0818a0" /><path d="M4 1h8v5H4zM3 8h10v7H3z" fill="#fff" /><path d="M3 9h10v3H3z" fill="#d02020" /></>],
  ['Genesis', <><circle cx="9" cy="9" r="6.500" fill="#30b0a8" stroke="#185888" /><circle cx="10" cy="10" r="3" fill="#60d060" stroke="#fff" /><path d="M0 3l6-2 2 4-5 3z" fill="#1868a8" /></>],
  ['Engineerin...', <XIcon />],
  ['Progress', <XIcon />],
  ['pcbnet2002', <Globe />],
  ['计算器', <><path d="M0 2h16v12H0z" fill="#087878" /><path d="M2 4h12v3H2z" fill="#e0f0f0" /><path d="M2 9h12M2 12h12" stroke="#e0f0f0" strokeDasharray="2 1" /></>],
  ['部分客户...', <><Book c="#2858b0" /><path d="M2 5l1.500 6L5 7l1.500 4L8 5" stroke="#fff" fill="none" /></>],
  ['CAM中心P...', xls],
  ['Graphic Edi...', <XIcon />, true],
  ['2G0JL005A...', xls],
  ['Microsoft E...', <><path d="M1 1h14v14H1z" fill="#2f8a3a" /><path d="M3 4l9 9M12 4l-9 9" stroke="#fff" strokeWidth="2" /></>],
]

const winButton = 'border border-t-white border-l-white border-r-[#404040] border-b-[#404040] bg-[#d4d0c8]'
const pressed = 'border border-t-[#404040] border-l-[#404040] border-r-white border-b-white bg-[#ecebe8]'

const Grip = () => <span className="h-5 w-1 border border-t-white border-r-[#808080] border-b-[#808080] border-l-white" />

function Taskbar() {
  return (
    <footer className="flex h-7 items-center border-t border-white bg-[#d4d0c8] pt-px pr-[3px] pl-[2px] font-['Liberation_Sans','Noto_Sans_CJK_SC',sans-serif] text-xs">
      <button className={`flex h-[22px] w-[50px] items-center gap-px pl-[2px] font-medium whitespace-nowrap ${winButton}`}>
        <svg width="18" height="16" viewBox="0 0 18 16"><path d="M5 2l5-1v6l-5 1z" fill="#e02020" /><path d="M11 1l5 1v6l-5-1z" fill="#20a020" /><path d="M5 9l5-1v6l-5 1z" fill="#1030c0" /><path d="M11 8l5 1v6l-5-1z" fill="#e8c010" /><path d="M0 4h4M1 7h3M0 10h4M1 13h3" stroke="#101010" strokeWidth="2" strokeDasharray="2 1" /><path d="M10.500 0v15M4 8h13M4.500 1v14M16.500 1v14" stroke="#000" fill="none" /></svg>
        开始
      </button>
      <div className="ml-1 flex w-[110px] items-center gap-2">
        <Grip />
        <button aria-label="Show desktop"><svg width="16" height="16" viewBox="0 0 16 16"><path d="M0 1h16v14H0z" fill="#48a8c8" /><path d="M3 3h9v11H3z" fill="#fff" stroke="#444" /><path d="M6 10l7-9 2 1-6 9z" fill="#e8c860" stroke="#444" /></svg></button>
        <button aria-label="Outlook"><svg width="16" height="16" viewBox="0 0 16 16"><rect width="16" height="16" rx="2" fill="#f0b848" /><circle cx="8" cy="8" r="5" fill="#fff4d8" stroke="#c87818" /><path d="M8 5v3h2" stroke="#a05010" fill="none" /></svg></button>
        <button aria-label="Browser"><svg width="16" height="16" viewBox="0 0 16 16"><Globe /></svg></button>
        <span className="ml-auto" />
        <Grip />
      </div>
      <div className="flex min-w-0 flex-1 gap-[3px]">
        {tasks.map(([name, icon, active], i) => (
          <button key={i} className={`flex h-[22px] min-w-0 flex-1 items-center gap-[2px] overflow-hidden pl-[3px] whitespace-nowrap ${name.charCodeAt(0) > 255 ? 'text-xs' : 'text-[11px]'} ${active ? pressed : winButton}`}>
            <svg width="16" height="16" viewBox="0 0 16 16" className="shrink-0">{icon}</svg>
            {name}
          </button>
        ))}
      </div>
      <div className="ml-3 flex h-[22px] w-[147px] items-center gap-[2px] border border-t-[#808080] border-r-white border-b-white border-l-[#808080] pl-1">
        <svg width="16" height="16" viewBox="0 0 16 16"><path d="M1 9l7-7 7 5-8 8z" fill="#e8d820" stroke="#303000" /><path d="M4 9l5-4M6 12l6-5" stroke="#303000" /></svg>
        <svg width="16" height="16" viewBox="0 0 16 16"><path d="M0 13L8 2l3 7z" fill="#e01818" /><path d="M9 6l7 8-5-1z" fill="#18b830" /></svg>
        <svg width="16" height="16" viewBox="0 0 16 16"><path d="M1 2l13 12M14 1L2 14" stroke="#60188a" strokeWidth="3" /></svg>
        <svg width="16" height="16" viewBox="0 0 16 16"><circle cx="8" cy="9" r="6" fill="#38a8b8" /><circle cx="8" cy="10" r="3.500" fill="#fff" /><path d="M7 0h4v7H7z" fill="#e8a020" /><path d="M6 9h4v3H6z" fill="#d82020" /></svg>
        <svg width="16" height="16" viewBox="0 0 16 16"><path d="M0 0h16v16H0z" fill="#7c7848" /><circle cx="8" cy="8" r="5.500" fill="#e8e6d8" stroke="#504c20" /><path d="M8 5v3h3" stroke="#504c20" fill="none" /></svg>
        <time className="ml-auto pr-3">23:39</time>
      </div>
    </footer>
  )
}

export default function App() {
  return (
    <div className="relative flex h-screen flex-col overflow-hidden bg-[#d4d0c8] text-black">
      <div className="flex min-h-0 flex-1">
        <GraphicEditor />
        <Excel />
      </div>
      <Taskbar />

      {/* floating input method bar */}
      <div className="absolute top-0 left-[448px] flex h-6 w-[77px] items-center gap-2 border border-t-white border-r-[#808080] border-b-[#808080] border-l-white bg-[#d8d4cc] pl-1">
        <span className="h-[18px] w-[2px] border-l-2 border-dotted border-[#909090]" />
        <svg width="16" height="16" viewBox="0 0 16 16" className="-ml-1"><rect width="16" height="16" rx="1" fill="#28b838" /><path d="M12 4H5v3.500h6V12H4" stroke="#fff" strokeWidth="2" fill="none" /></svg>
        <svg width="14" height="16" viewBox="0 0 14 16" className="ml-1"><path d="M1 1h11v12H9l-1 2-2-2H1z" fill="#ffffe0" stroke="#000" /><path d="M4 5V3h5v3H7v2M7 9v2" fill="none" stroke="#000080" strokeWidth="1.500" /></svg>
        <svg width="8" height="14" viewBox="0 0 8 14" className="ml-1"><path d="M2 1h4v1.500H2zM1 8h6l-3 4z" /></svg>
      </div>

      {/* annotation arrows pointing at the outline requirement */}
      <svg className="pointer-events-none absolute top-[240px] right-[300px]" width="440" height="380" viewBox="700 240 440 380">
        <path d="M846 248L1114 589M718 463L1102 599" stroke="#14f040" strokeWidth="3" fill="none" />
        <path d="M1121 597l-15-8 10-8zM1113 603l-17 1 5-11z" fill="#14f040" />
      </svg>
    </div>
  )
}
